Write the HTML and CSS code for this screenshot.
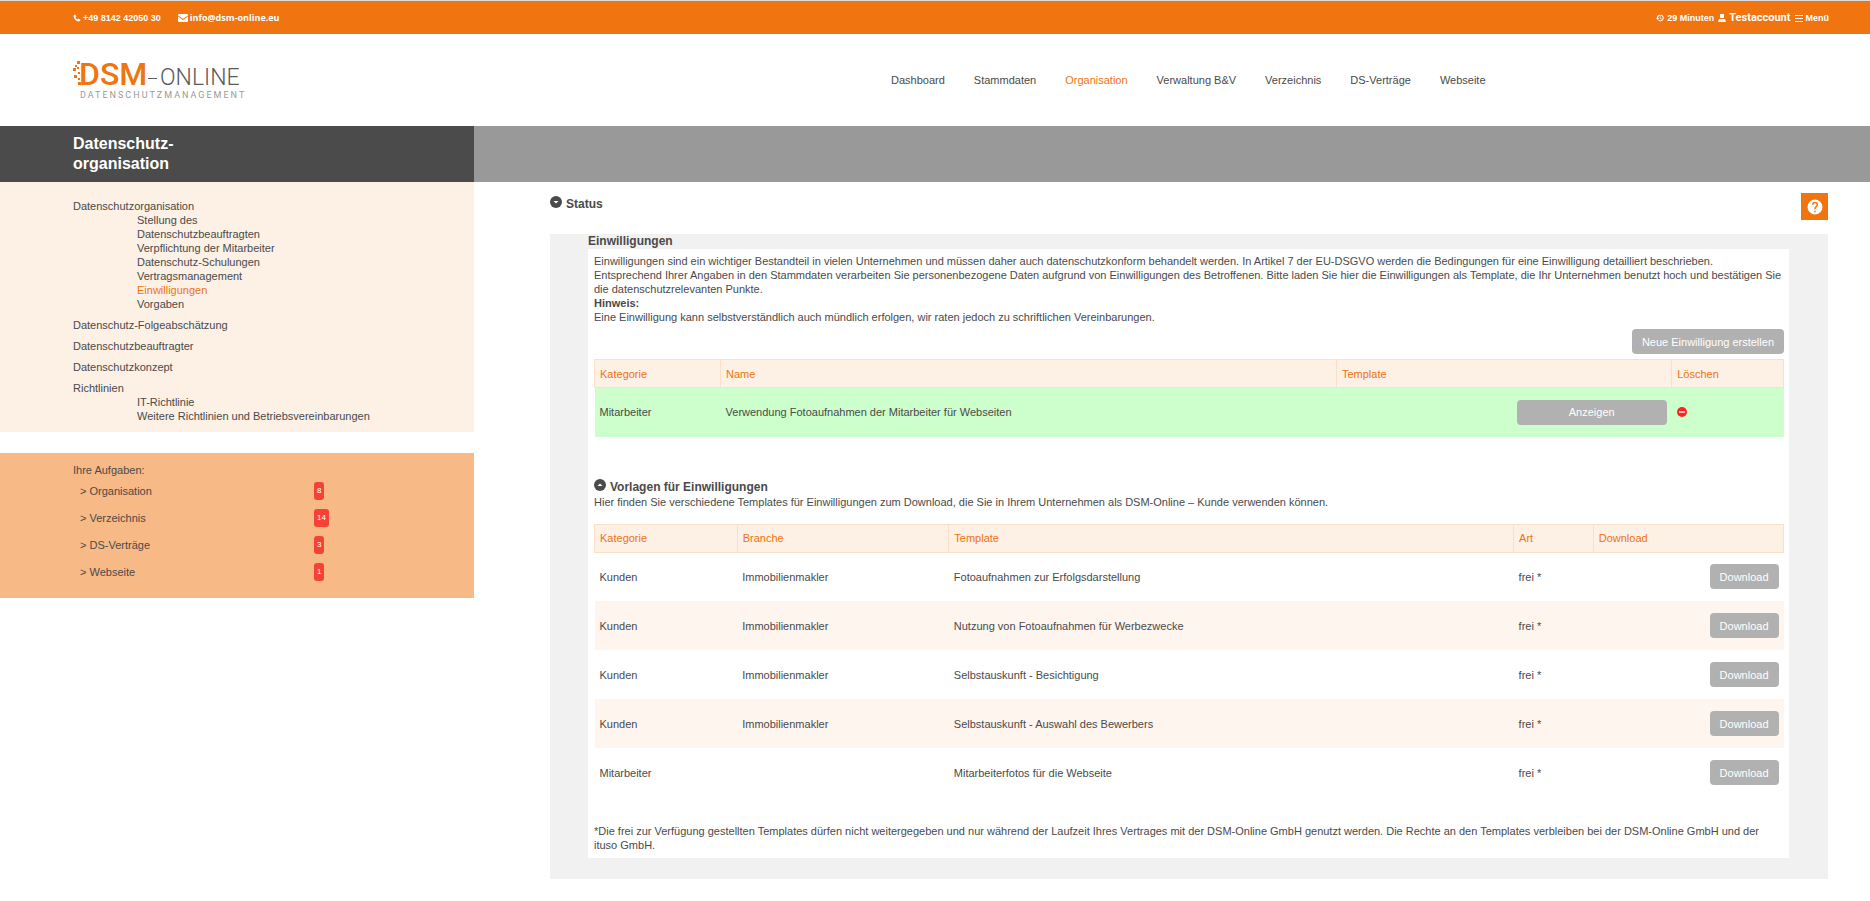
FILE: index.html
```html
<!DOCTYPE html>
<html lang="de">
<head>
<meta charset="utf-8">
<title>DSM-Online – Einwilligungen</title>
<link rel="stylesheet" href="styles.css">
</head>
<body>
<div class="topbar">
  <div class="topbar-group topbar-contact">
    <a href="#"><svg class="ico" viewBox="0 0 16 16"><path d="M4.6 1.2 6.8 5 5 6.8c.8 1.900 2.200 3.300 4.200 4.200L11 9.200l3.800 2.200c.2 2-1.300 3.400-3.200 3.400C6.500 14.600 1.400 9.500 1.200 4.400c0-1.900 1.400-3.400 3.400-3.200z"/></svg>+49 8142 42050 30</a>
    <a class="mail" href="#"><svg class="ico ico-mail" viewBox="0 0 18 14"><path d="M1.500 0h15A1.500 1.500 0 0 1 18 1.500v.8L9 8.200 0 2.300v-.8A1.500 1.500 0 0 1 1.500 0zM0 4.500l9 5.900 9-5.900v8a1.500 1.500 0 0 1-1.500 1.500h-15A1.500 1.500 0 0 1 0 12.500z"/></svg>info@dsm-online.eu</a>
  </div>
  <div class="topbar-group topbar-user">
    <span><svg class="ico" viewBox="0 0 24 24"><path d="M13 2a10 10 0 0 0-10 10H0l5 6 5-6H6a7 7 0 1 1 2.100 4.900l-2 2.200A10 10 0 1 0 13 2zm-1.500 5v6l4.500 2.700 1.200-1.800-3.500-2.100V7z"/></svg>29 Minuten</span>
    <a class="account" href="#"><svg class="ico" viewBox="0 0 8 8"><path d="M2 0h4v4H2zM1 5h6l1 3H0z"/></svg>Testaccount</a>
    <a href="#"><svg class="ico" viewBox="0 0 8 8"><path d="M0 1h8v1H0zM0 4h8v1H0zM0 7h8v1H0z"/></svg>Menü</a>
  </div>
</div>
<header class="header">
  <a class="logo" href="#" aria-label="DSM-Online Datenschutzmanagement">
    <svg class="logo-svg" viewBox="0 0 186 64">
      <g class="logo-dots"><rect x="4" y="13" width="3" height="3"/><rect x="2" y="17" width="2" height="2"/><rect x="0" y="20" width="3" height="3"/><rect x="4" y="19" width="2" height="2"/><rect x="1" y="27" width="3" height="3"/><rect x="5" y="24" width="2" height="2"/><rect x="5" y="30" width="2" height="2"/><rect x="5" y="34" width="3" height="3"/></g>
      <text class="logo-dsm" x="6" y="37">DSM</text>
      <path class="logo-dash" d="M75 30h9v1h-9z"/>
      <text class="logo-online" x="87" y="37">ONLINE</text>
      <text class="logo-tag" x="7" y="50">DATENSCHUTZMANAGEMENT</text>
    </svg>
  </a>
  <nav class="nav">
    <a href="#">Dashboard</a><a href="#">Stammdaten</a><a class="active" href="#">Organisation</a><a href="#">Verwaltung B&amp;V</a><a href="#">Verzeichnis</a><a href="#">DS-Verträge</a><a href="#">Webseite</a>
  </nav>
</header>
<div class="titlebar"><h1>Datenschutz-<br>organisation</h1></div>
<div class="page">
  <aside class="sidebar">
    <nav class="sidenav">
      <ul>
        <li><a href="#">Datenschutzorganisation</a>
          <ul>
            <li><a href="#">Stellung des<br>Datenschutzbeauftragten</a></li>
            <li><a href="#">Verpflichtung der Mitarbeiter</a></li>
            <li><a href="#">Datenschutz-Schulungen</a></li>
            <li><a href="#">Vertragsmanagement</a></li>
            <li><a class="active" href="#">Einwilligungen</a></li>
            <li><a href="#">Vorgaben</a></li>
          </ul></li>
        <li><a href="#">Datenschutz-Folgeabschätzung</a></li>
        <li><a href="#">Datenschutzbeauftragter</a></li>
        <li><a href="#">Datenschutzkonzept</a></li>
        <li><a href="#">Richtlinien</a>
          <ul>
            <li><a href="#">IT-Richtlinie</a></li>
            <li><a href="#">Weitere Richtlinien und Betriebsvereinbarungen</a></li>
          </ul></li>
      </ul>
    </nav>
    <section class="tasks">
      <p>Ihre Aufgaben:</p>
      <ul>
        <li><a href="#">&gt; Organisation</a><span class="badge">8</span></li>
        <li><a href="#">&gt; Verzeichnis</a><span class="badge">14</span></li>
        <li><a href="#">&gt; DS-Verträge</a><span class="badge">3</span></li>
        <li><a href="#">&gt; Webseite</a><span class="badge">1</span></li>
      </ul>
    </section>
  </aside>
  <main class="main">
    <div class="status">
      <h2><svg class="toggle" viewBox="0 0 12 12"><circle cx="6" cy="6" r="6"/><path d="M3.500 5h5L6 7.500z"/></svg>Status</h2>
      <button class="help" type="button" aria-label="Hilfe"><svg viewBox="0 0 24 24"><path d="M12 2a10 10 0 1 0 0 20 10 10 0 0 0 0-20zm1 17h-2v-2h2zm2.070-7.750-.9.920C13.450 12.900 13 13.500 13 15h-2v-.5c0-1.100.450-2.100 1.170-2.830l1.240-1.260A2 2 0 1 0 10 9H8a4 4 0 1 1 8 0c0 .880-.360 1.680-.930 2.250z"/></svg></button>
    </div>
    <section class="frame">
      <h2>Einwilligungen</h2>
      <div class="panel">
        <p>Einwilligungen sind ein wichtiger Bestandteil in vielen Unternehmen und müssen daher auch datenschutzkonform behandelt werden. In Artikel 7 der EU-DSGVO werden die Bedingungen für eine Einwilligung detailliert beschrieben.<br>Entsprechend Ihrer Angaben in den Stammdaten verarbeiten Sie personenbezogene Daten aufgrund von Einwilligungen des Betroffenen. Bitte laden Sie hier die Einwilligungen als Template, die Ihr Unternehmen benutzt hoch und bestätigen Sie die datenschutzrelevanten Punkte.<br><b>Hinweis:</b><br>Eine Einwilligung kann selbstverständlich auch mündlich erfolgen, wir raten jedoch zu schriftlichen Vereinbarungen.</p>
        <div class="actions"><button class="btn" type="button">Neue Einwilligung erstellen</button></div>
        <table class="table consents">
          <colgroup><col class="c-kat"><col class="c-name"><col class="c-tpl"><col class="c-del"></colgroup>
          <thead><tr><th>Kategorie</th><th>Name</th><th>Template</th><th>Löschen</th></tr></thead>
          <tbody><tr><td>Mitarbeiter</td><td>Verwendung Fotoaufnahmen der Mitarbeiter für Webseiten</td><td class="right"><button class="btn btn-wide" type="button">Anzeigen</button></td><td><button class="delete" type="button" aria-label="Löschen"><svg viewBox="0 0 10 10"><circle cx="5" cy="5" r="5"/><path d="M2 4h6v2H2z"/></svg></button></td></tr></tbody>
        </table>
        <h2 class="templates-title"><svg class="toggle" viewBox="0 0 12 12"><circle cx="6" cy="6" r="6"/><path d="M3.500 7h5L6 4.500z"/></svg>Vorlagen für Einwilligungen</h2>
        <p>Hier finden Sie verschiedene Templates für Einwilligungen zum Download, die Sie in Ihrem Unternehmen als DSM-Online – Kunde verwenden können.</p>
        <table class="table templates">
          <colgroup><col class="t-kat"><col class="t-bra"><col class="t-tpl"><col class="t-art"><col class="t-dl"></colgroup>
          <thead><tr><th>Kategorie</th><th>Branche</th><th>Template</th><th>Art</th><th>Download</th></tr></thead>
          <tbody>
            <tr><td>Kunden</td><td>Immobilienmakler</td><td>Fotoaufnahmen zur Erfolgsdarstellung</td><td>frei *</td><td class="right"><button class="btn" type="button">Download</button></td></tr>
            <tr><td>Kunden</td><td>Immobilienmakler</td><td>Nutzung von Fotoaufnahmen für Werbezwecke</td><td>frei *</td><td class="right"><button class="btn" type="button">Download</button></td></tr>
            <tr><td>Kunden</td><td>Immobilienmakler</td><td>Selbstauskunft - Besichtigung</td><td>frei *</td><td class="right"><button class="btn" type="button">Download</button></td></tr>
            <tr><td>Kunden</td><td>Immobilienmakler</td><td>Selbstauskunft - Auswahl des Bewerbers</td><td>frei *</td><td class="right"><button class="btn" type="button">Download</button></td></tr>
            <tr><td>Mitarbeiter</td><td></td><td>Mitarbeiterfotos für die Webseite</td><td>frei *</td><td class="right"><button class="btn" type="button">Download</button></td></tr>
          </tbody>
        </table>
        <p class="footnote">*Die frei zur Verfügung gestellten Templates dürfen nicht weitergegeben und nur während der Laufzeit Ihres Vertrages mit der DSM-Online GmbH genutzt werden. Die Rechte an den Templates verbleiben bei der DSM-Online GmbH und der ituso GmbH.</p>
      </div>
    </section>
  </main>
</div>
</body>
</html>
```
FILE: styles.css
```css
* { box-sizing: border-box; }
body {
  margin: 0;
  background: #fff;
  color: #4a4a4a;
  font: 11px/14px Arial, "Liberation Sans", sans-serif;
}
a { color: inherit; text-decoration: none; }
p, h1, h2, ul { margin: 0; padding: 0; }
ul { list-style: none; }
button { font: inherit; border: 0; cursor: pointer; }
svg { fill: currentColor; flex: none; }

.topbar {
  display: flex;
  justify-content: space-between;
  align-items: center;
  height: 34px;
  padding: 0 41px 0 73px;
  border-top: 1px solid #dcdcdc;
  background: #f0740f;
  color: #fff;
  font-size: 9px;
  font-weight: bold;
}
.topbar-group, .topbar-group > * { display: flex; align-items: center; }
.topbar-group > * { gap: 2px; }
.topbar-contact { gap: 17px; }
.topbar-user { gap: 4px; }
.topbar-user > * { gap: 3px; }
.mail { font-family: "Open Sans", sans-serif; }
.account { font: bold 11px/14px Roboto, sans-serif; }
.ico { width: 8px; height: 8px; }
.ico-mail { width: 10px; }

.header { display: flex; align-items: center; height: 92px; padding-left: 73px; }
.logo { width: 818px; }
.logo-svg { display: block; width: 186px; height: 64px; }
.logo-dots, .logo-dsm { fill: #f0740f; }
.logo-dsm { font: 500 32px Roboto, sans-serif; }
.logo-online { font: 300 23px Roboto, sans-serif; }
.logo-online, .logo-dash { fill: #5a5a5a; }
.logo-tag { font: 9px Roboto, sans-serif; letter-spacing: 2px; fill: #999; }
.nav { display: flex; gap: 29px; }
.active { color: #f0740f; }

.titlebar { display: flex; background: #999; color: #fff; }
.titlebar h1 {
  width: 474px;
  padding: 8px 0 8px 73px;
  background: #4b4b4b;
  font-size: 16px;
  line-height: 20px;
}

.page { display: flex; align-items: flex-start; }
.sidebar { flex: none; width: 474px; }
.sidenav { padding: 17px 0 9px 73px; background: #fdf0e4; }
.sidenav > ul { display: flex; flex-direction: column; gap: 7px; }
.sidenav ul ul { padding-left: 64px; }
.sidenav a { display: block; }
.tasks { margin-top: 21px; padding: 10px 0 13px 73px; background: #f7b985; }
.tasks li { display: flex; align-items: center; height: 27px; padding-left: 7px; }
.tasks a { width: 234px; }
.badge { padding: 0 3px; border-radius: 3px; background: #f44336; color: #fff; font-size: 8px; line-height: 18px; }

.main { flex: 1; min-width: 0; padding: 11px 42px 21px 76px; }
h2 { font-size: 12px; line-height: 15px; }
.toggle { width: 12px; height: 12px; margin-right: 4px; fill: #4b4b4b; }
.toggle path { fill: #fff; }
.status { display: flex; justify-content: space-between; margin-bottom: 14px; }
.status h2 { padding-top: 3px; }
.help { display: flex; align-items: center; justify-content: center; width: 27px; height: 27px; padding: 0; background: #f0740f; color: #fff; }
.help svg { width: 18px; height: 18px; }
.frame { padding: 0 39px 21px 38px; background: #f1f1f1; }
.panel { padding: 5px 5px 6px 6px; background: #fff; }
.actions { display: flex; justify-content: flex-end; padding: 5px 0; }
.btn { height: 25px; padding: 0 10px; border-radius: 4px; background: #b1b1b1; color: #fff; }
.btn-wide { width: 150px; }

.table { width: 100%; border-collapse: collapse; table-layout: fixed; }
.table th {
  height: 28px;
  padding: 0 5px;
  border: 1px solid #fbdfc6;
  background: #fdf0e4;
  color: #f0740f;
  font-weight: normal;
  text-align: left;
}
.table td { height: 49px; padding: 0 5px; }
.table .right { text-align: right; }
.consents tbody tr { background: #ccffcc; }
.templates tbody tr:nth-child(even) { background: #fef5ef; }
.c-kat { width: 10.600%; }
.c-name { width: 51.800%; }
.c-tpl { width: 28.200%; }
.t-kat { width: 12%; }
.t-bra { width: 17.800%; }
.t-tpl { width: 47.500%; }
.t-art { width: 6.700%; }
.delete { display: block; width: 10px; height: 10px; padding: 0; background: none; color: #f22; }
.delete svg { display: block; }
.delete path { fill: #fbb; }
.templates-title { margin-top: 42px; }
.templates { margin: 15px 0 27px; }
```
